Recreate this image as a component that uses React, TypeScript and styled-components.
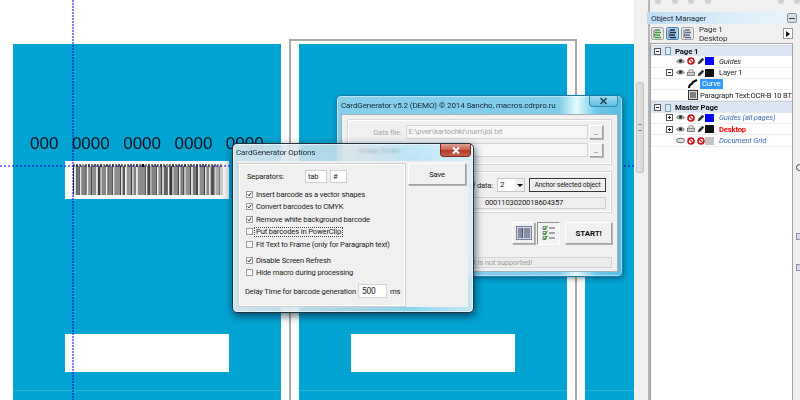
import React from 'react';
import styled, { createGlobalStyle } from 'styled-components';

const GlobalStyle = createGlobalStyle`
  html, body {
    margin: 0;
    padding: 0;
    background: #fff;
  }
  * {
    box-sizing: border-box;
  }
`;

const Screen = styled.div`
  width: 800px;
  height: 400px;
  display: flex;
  overflow: hidden;
  position: relative;
  font-family: Roboto, "Liberation Sans", Arial, sans-serif;
  font-size: 7.6px;
  letter-spacing: -0.15px;
  color: #1c1c1c;
  filter: blur(0.25px);
`;

/* ---------- drawing canvas ---------- */

const Canvas = styled.div`
  position: relative;
  width: 634px;
  flex: none;
  background: #fff;
  overflow: hidden;
`;

const Card = styled.div<{ $x: number; $w: number }>`
  position: absolute;
  left: ${p => p.$x}px;
  top: 44px;
  width: ${p => p.$w}px;
  height: 356px;
  background: #00a3d2;
  &::after {
    content: '';
    position: absolute;
    left: 0;
    right: 0;
    top: 346px;
    height: 1px;
    background: #2cb3da;
  }
`;

const PageFrame = styled.div`
  position: absolute;
  left: 289px;
  top: 39px;
  width: 288px;
  height: 380px;
  border: 2px solid #a8a8a8;
`;

const WhitePlate = styled.div<{ $x: number; $y: number }>`
  position: absolute;
  left: ${p => p.$x}px;
  top: ${p => p.$y}px;
  width: 164px;
  height: 38px;
  background: #fff;
`;

const CardNumber = styled.div`
  position: absolute;
  left: 30px;
  top: 134px;
  display: flex;
  gap: 13.5px;
  font-family: "Liberation Sans", Arial, sans-serif;
  font-size: 17px;
  line-height: 20px;
  letter-spacing: 0;
  color: #06131c;
`;

const GuideV = styled.div`
  position: absolute;
  left: 72px;
  top: 0;
  bottom: 0;
  width: 2px;
  background: repeating-linear-gradient(to bottom, #8080ff 0 2px, transparent 2px 3px);
  mix-blend-mode: multiply;
`;

const GuideH = styled.div`
  position: absolute;
  left: 0;
  right: 0;
  top: 165px;
  height: 2px;
  background: repeating-linear-gradient(to right, #8080ff 0 2px, transparent 2px 4px);
  mix-blend-mode: multiply;
`;

const BarcodeArt = styled.svg`
  position: absolute;
  left: 65px;
  top: 161px;
`;

// width, grey level: bars blur into each other, as in a shrunken barcode
const barRuns: [number, number][] = [
  [1, 70], [1, 255], [2, 110], [1, 60], [1, 230], [3, 130], [1, 50], [1, 240], [2, 150], [1, 70], [3, 140], [1, 245],
  [2, 60], [1, 190], [3, 135], [1, 240], [1, 70], [2, 130], [1, 50], [1, 235], [4, 140], [1, 70], [1, 220], [2, 90],
  [1, 245], [3, 150], [1, 60], [1, 200], [2, 130], [1, 245], [5, 140], [1, 70], [1, 235], [2, 70], [1, 170], [3, 130],
  [1, 60], [1, 250], [2, 145], [1, 60], [1, 230], [3, 100], [1, 245], [2, 60], [1, 180], [3, 140], [1, 55], [1, 240],
  [2, 130], [1, 65], [1, 200], [3, 145], [1, 60], [1, 245], [2, 120], [2, 70], [1, 240], [3, 140], [1, 60], [1, 225],
  [2, 130], [1, 240], [3, 80], [1, 200], [2, 145], [1, 60], [2, 170],
];

const runTotal = barRuns.reduce((sum, [w]) => sum + w, 0);
const stretch = 150 / runTotal;

const bars = barRuns.reduce<{ x: number; w: number; g: number }[]>((list, [w, g]) => {
  const last = list[list.length - 1];
  list.push({ x: last ? last.x + last.w : 8, w: w * stretch, g });
  return list;
}, []);

const codeMarks = Array.from({ length: 50 }, (_, i) => i);

function Barcode() {
  return (
    <BarcodeArt width="164" height="38" viewBox="0 0 164 38">
      <defs>
        <linearGradient id="fade" x1="0" x2="1" y1="0" y2="0">
          <stop offset="0.9" stopColor="#fff" stopOpacity="0" />
          <stop offset="1" stopColor="#ddd" stopOpacity="0.8" />
        </linearGradient>
      </defs>
      {bars.map(b => (
        <rect key={b.x} x={b.x} y="5" width={b.w} height="29" fill={`rgb(${b.g},${b.g},${b.g})`} />
      ))}
      {codeMarks.map(i => (
        <rect
          key={i}
          x={8 + i * 3}
          y="3"
          width="2"
          height="3"
          fill={i === 23 ? '#000' : i % 7 === 3 ? '#9a9a40' : i % 2 ? '#555' : '#777'}
        />
      ))}
      <rect x="0" y="0" width="164" height="38" fill="url(#fade)" />
    </BarcodeArt>
  );
}

/* ---------- aero windows ---------- */

const Win = styled.div<{ $x: number; $y: number; $w: number; $h: number; $focused?: boolean }>`
  position: absolute;
  left: ${p => p.$x}px;
  top: ${p => p.$y}px;
  width: ${p => p.$w}px;
  height: ${p => p.$h}px;
  display: flex;
  flex-direction: column;
  padding: ${p => (p.$focused ? '0 5px 5px' : '0 4px 4px')};
  border-radius: 5px;
  border: 1px solid ${p => (p.$focused ? '#24343f' : '#1a7fa8')};
  backdrop-filter: ${p => (p.$focused ? 'blur(1px)' : 'none')};
  box-shadow: ${p =>
    p.$focused
      ? '0 0 0 1px rgba(255,255,255,.55) inset, 1px 3px 9px rgba(0,20,40,.65)'
      : '0 0 0 1px rgba(255,255,255,.45) inset, 1px 2px 5px rgba(0,40,70,.45)'};
  background: ${p =>
    p.$focused
      ? 'linear-gradient(90deg, rgba(226,234,240,.9) 0%, rgba(205,224,234,.8) 55%, rgba(176,226,246,.8) 75%, rgba(216,238,250,.9) 100%)'
      : 'linear-gradient(90deg, #86cfea 0%, #80cdea 78%, #e6faff 84%, #6cc8ea 91%, #58bce2 100%)'};
`;

const TitleBar = styled.div<{ $h: number }>`
  height: ${p => p.$h}px;
  flex: none;
  display: flex;
  align-items: center;
  position: relative;
  font-size: 8px;
  letter-spacing: -0.1px;
  color: #16242e;
  white-space: nowrap;
`;

const OptionsTitle = styled.span`
  margin-left: -2px;
`;

const CloseBtn = styled.div<{ $active?: boolean }>`
  position: absolute;
  right: ${p => (p.$active ? '-3px' : '0')};
  top: 0;
  width: ${p => (p.$active ? '31px' : '29px')};
  height: ${p => (p.$active ? '13px' : '11px')};
  display: flex;
  align-items: center;
  justify-content: center;
  border-radius: 0 0 4px 4px;
  border: 1px solid ${p => (p.$active ? '#7c2a20' : '#2f8bb0')};
  border-top: none;
  background: ${p =>
    p.$active
      ? 'linear-gradient(#dfa398 0%, #c9604f 48%, #b13a28 55%, #c9614c 100%)'
      : 'linear-gradient(#a5dcf0, #63bfe2)'};
`;

const Client = styled.div`
  flex: 1;
  min-height: 0;
  background: #f0f0f0;
  border: 1px solid #9fb1ba;
`;

/* main window */

const MainClient = styled(Client)`
  display: flex;
  flex-direction: column;
  gap: 6px;
  padding: 4px 5px 3px;
`;

const Group = styled.div<{ $h: number }>`
  height: ${p => p.$h}px;
  flex: none;
  display: flex;
  flex-direction: column;
  border: 1px solid #d6d6d6;
  box-shadow: inset 0 0 0 1px #fff;
`;

const FileGroup = styled(Group)`
  gap: 4px;
  padding: 5px 8px 0 0;
`;

const FileRow = styled.div`
  display: flex;
  align-items: center;
  gap: 1px;
`;

const FileLabel = styled.span<{ $behindGlass?: boolean }>`
  width: 57px;
  padding-right: 3px;
  text-align: right;
  color: ${p => (p.$behindGlass ? '#111' : '#a8a8a8')};
`;

const FileInput = styled.div`
  width: 184px;
  height: 14px;
  padding: 0 2px;
  border: 1px solid #d4d4d4;
  background: #f7f7f7;
  color: #a4a4a4;
  line-height: 12px;
  white-space: nowrap;
`;

const RaisedBtn = styled.div<{ $w: number; $h: number; $bold?: boolean }>`
  width: ${p => p.$w}px;
  height: ${p => p.$h}px;
  flex: none;
  display: flex;
  align-items: center;
  justify-content: center;
  background: #f0f0f0;
  border: 1px solid;
  border-color: #fff #a0a0a0 #a0a0a0 #fff;
  box-shadow: 1px 1px 0 #b4b4b4;
  color: #111;
  font-size: ${p => (p.$bold ? '8px' : '7.6px')};
  font-weight: ${p => (p.$bold ? 700 : 400)};
`;

const PressedBtn = styled(RaisedBtn)`
  border-color: #8f8f8f #fff #fff #8f8f8f;
  box-shadow: none;
  background: #f4f4f4;
`;

const AnchorGroup = styled(Group)`
  align-items: flex-end;
  gap: 5px;
  padding: 6px 5px 0 0;
`;

const AnchorRow = styled.div`
  display: flex;
  align-items: center;
`;

const DataLabel = styled.span`
  margin-right: 4px;
`;

const Combo = styled.div`
  width: 28px;
  height: 14px;
  display: flex;
  justify-content: space-between;
  padding-left: 2px;
  border: 1px solid #c8c8c8;
  background: #fff;
  font-size: 8px;
  line-height: 12px;
  margin-right: 4px;
`;

const ComboArrow = styled.span`
  width: 9px;
  background: #eee;
  display: flex;
  align-items: center;
  justify-content: center;
  &::after {
    content: '';
    border: 3px solid transparent;
    border-top: 3px solid #111;
    margin-top: 3px;
  }
`;

const AnchorBtn = styled.div`
  width: 77px;
  height: 14px;
  display: flex;
  align-items: center;
  justify-content: center;
  border: 1px solid #333;
  box-shadow: inset 0 0 0 1px #f8f8f8;
  background: #ececec;
  font-size: 6.8px;
  white-space: nowrap;
`;

const Readout = styled.div`
  width: 164px;
  height: 12px;
  border: 1px solid #d0d0d0;
  text-align: center;
  line-height: 10px;
  background: #eeeeee;
`;

const ActionRow = styled.div`
  display: flex;
  align-items: flex-start;
  justify-content: flex-end;
  gap: 2px;
  padding-top: 3px;
`;

const StartBtn = styled(RaisedBtn)`
  margin-left: 3px;
`;

const StatusBar = styled.div`
  height: 11px;
  margin-top: 12px;
  padding-right: 79px;
  border: 1px solid #d4d4d4;
  background: #ececec;
  color: #a0a0a0;
  text-align: right;
  line-height: 9px;
`;

/* options window */

const OptionsBody = styled(Client)`
  display: flex;
  gap: 2px;
  padding: 2px 2px 0 0;
  border: none;
`;

const OptionsPanel = styled.div`
  width: 168px;
  height: 144px;
  flex: none;
  padding: 6px 0 0 6px;
  border: 1px solid #cfcfcf;
  box-shadow: inset 0 0 0 1px #fff;
`;

const SeparatorRow = styled.div`
  display: flex;
  align-items: center;
  height: 13px;
  margin-bottom: 5px;
  padding-left: 2px;
`;

const SeparatorLabel = styled.span`
  width: 58px;
`;

const SmallInput = styled.div<{ $w: number }>`
  width: ${p => p.$w}px;
  height: 13px;
  margin-right: 3px;
  padding-left: 2px;
  border: 1px solid #d0d0d0;
  background: #fff;
  line-height: 11px;
`;

const OptionList = styled.div<{ $after?: number }>`
  display: flex;
  flex-direction: column;
  margin-bottom: ${p => p.$after ?? 0}px;
`;

const OptionRow = styled.div`
  height: 12.5px;
  display: flex;
  align-items: center;
  gap: 3px;
  padding-left: 1px;
  white-space: nowrap;
`;

const CheckBox = styled.span`
  width: 7px;
  height: 7px;
  flex: none;
  display: flex;
  align-items: center;
  justify-content: center;
  border: 1px solid #9a9a9a;
  background: #fff;
`;

const FocusLabel = styled.span`
  outline: 1px dotted #444;
  padding: 0 1px;
  margin-left: -1px;
  line-height: 8px;
`;

const DelayRow = styled.div`
  display: flex;
  align-items: center;
  margin-top: 5px;
  white-space: nowrap;
`;

const DelayLabel = styled.span`
  width: 113px;
`;

const DelayInput = styled.div`
  width: 29px;
  height: 14px;
  margin-right: 3px;
  padding-left: 3px;
  border: 1px solid #d0d0d0;
  background: #fff;
  font-size: 8.4px;
  line-height: 12px;
`;

/* ---------- right dockers ---------- */

const ScrollTrack = styled.div`
  width: 16px;
  flex: none;
  padding: 82px 6px 0 2px;
  background: #f0f0f0;
  border-right: 2px solid #b5b5b5;
`;

const ScrollThumb = styled.div`
  width: 8px;
  height: 91px;
  display: flex;
  align-items: center;
  justify-content: center;
  background: linear-gradient(90deg, #e4e4e4, #d6d6d6);
  border: 1px solid #c4c4c4;
  border-radius: 2px;
  &::after {
    content: '';
    width: 4px;
    height: 5px;
    border-top: 1px solid #888;
    border-bottom: 1px solid #888;
  }
`;

const Docker = styled.div`
  flex: 1;
  min-width: 0;
  display: flex;
  flex-direction: column;
  background: #f0f0f0;
`;

const TopStrip = styled.div`
  height: 12px;
  flex: none;
  display: flex;
  align-items: flex-start;
  gap: 10.5px;
  padding-left: 5px;
`;

const StripIcon = styled.span<{ $push?: boolean }>`
  width: 6px;
  height: 4px;
  background: #d2d2d2;
  border-radius: 0 0 2px 2px;
  margin-left: ${p => (p.$push ? 'auto' : 0)};
`;

const DockTitle = styled.div`
  height: 12px;
  flex: none;
  display: flex;
  align-items: center;
  justify-content: space-between;
  margin-left: -3px;
  padding: 0 3px 0 4px;
  position: relative;
  background: linear-gradient(90deg, #bcdcf3, #dceefa 55%, #eaf4fb);
  font-size: 8px;
  letter-spacing: -0.1px;
  color: #20303c;
`;

const DockBtn = styled.span`
  width: 10px;
  height: 10px;
  display: flex;
  align-items: center;
  justify-content: center;
  border: 1px solid #8a959c;
  border-radius: 2px;
  background: #d8dde0;
  &::after {
    content: '';
    width: 6px;
    height: 1px;
    background: #444;
  }
`;

const DockTools = styled.div`
  height: 19px;
  flex: none;
  display: flex;
  align-items: center;
  padding: 0 7px 0 1px;
  gap: 2px;
`;

const ToolBtn = styled.span<{ $on?: boolean }>`
  width: 13px;
  height: 13px;
  flex: none;
  display: flex;
  align-items: center;
  justify-content: center;
  border: 1px solid ${p => (p.$on ? '#4d86b0' : '#a3a3a3')};
  border-radius: 2px;
  background: ${p => (p.$on ? '#a9d2ee' : '#e8e8e8')};
`;

const PageInfo = styled.div`
  margin-left: 3px;
  flex: 1;
  font-size: 8px;
  line-height: 9px;
  color: #333;
`;

const ForwardBtn = styled.span`
  width: 10px;
  height: 11px;
  display: flex;
  align-items: center;
  justify-content: center;
  border: 1px solid #999;
  background: #fff;
  &::after {
    content: '';
    border: 3px solid transparent;
    border-left: 4px solid #111;
    border-right: none;
  }
`;

const TreeWrap = styled.div`
  flex: 1;
  min-height: 0;
  display: flex;
`;

const Tree = styled.div`
  width: 143px;
  flex: none;
  padding-top: 1px;
  background: #fff;
  border: 1px solid #a2a2a2;
  border-bottom: none;
`;

const SideStrip = styled.div`
  flex: 1;
  min-width: 0;
  overflow: hidden;
  display: flex;
  flex-direction: column;
  padding-top: 121px;
  padding-left: 3px;
`;

const SideMark = styled.span<{ $mt: number; $dark?: boolean }>`
  display: block;
  margin-top: ${p => p.$mt}px;
  width: 8px;
  height: 7px;
  border: 1px solid ${p => (p.$dark ? '#444' : '#8c93a6')};
  border-radius: ${p => (p.$dark ? '4px' : '0')};
  background: ${p => (p.$dark ? 'transparent' : '#dde')};
`;

const SectionRow = styled.div`
  height: 11.3px;
  display: flex;
  align-items: center;
  padding-left: 3px;
  background: #dbe6f2;
  border-top: 1px solid #c9d5e2;
  font-size: 7.8px;
  font-weight: 700;
  color: #111;
`;

const TreeRow = styled.div<{ $indent: number }>`
  height: 11.3px;
  display: flex;
  align-items: center;
  padding-left: ${p => p.$indent}px;
  border-bottom: 1px solid #eeeeee;
  white-space: nowrap;
`;

const Expander = styled.span`
  width: 7px;
  height: 7px;
  flex: none;
  position: relative;
  margin-right: 4px;
  border: 1px solid #555;
  background: #fff;
  &::after {
    content: '';
    position: absolute;
    left: 1px;
    top: 2px;
    width: 3px;
    height: 1px;
    background: #222;
  }
`;

const LayerExpander = styled(Expander)`
  margin-right: 3px;
`;

const PlusExpander = styled(LayerExpander)`
  &::before {
    content: '';
    position: absolute;
    left: 2px;
    top: 1px;
    width: 1px;
    height: 3px;
    background: #222;
  }
`;

const SheetIcon = styled.span`
  width: 6px;
  height: 8px;
  flex: none;
  border: 1px solid #7f9aa8;
  background: #d8eeee;
  margin-right: 4px;
`;

const IconSet = styled.span`
  display: flex;
  flex: none;
  align-items: center;
  gap: 2px;
`;

const Swatch = styled.span<{ $c: string }>`
  width: 9px;
  height: 8px;
  flex: none;
  margin-right: 5px;
  background: ${p => p.$c};
`;

const RowLabel = styled.span<{ $tone?: 'blue' | 'red' | 'italic' }>`
  font-style: ${p => (p.$tone === 'blue' || p.$tone === 'italic' ? 'italic' : 'normal')};
  font-weight: ${p => (p.$tone === 'red' ? 700 : 400)};
  color: ${p => (p.$tone === 'blue' ? '#3f6bb0' : p.$tone === 'red' ? '#f00' : '#222')};
`;

const Selected = styled.span`
  background: #3399ff;
  color: #fff;
  padding: 0 2px;
  line-height: 10px;
`;

const ObjectIcon = styled.span`
  width: 10px;
  height: 10px;
  flex: none;
  display: flex;
  margin-right: 2px;
`;

/* ---------- little drawings ---------- */

const Tick = () => (
  <svg width="7" height="7" viewBox="0 0 7 7">
    <path d="M1 3.2 L2.8 5.4 L6 1" fill="none" stroke="#222" strokeWidth="1.4" />
  </svg>
);

const Eye = () => (
  <svg width="9" height="7" viewBox="0 0 9 7">
    <path d="M0.5 3.5 C2.5 0.5 6.5 0.5 8.5 3.5 C6.5 5.5 2.5 5.5 0.5 3.5 Z" fill="#bbb" stroke="#555" strokeWidth="0.7" />
    <circle cx="4.5" cy="3" r="1.5" fill="#222" />
  </svg>
);

const NoPrint = () => (
  <svg width="8" height="8" viewBox="0 0 8 8">
    <circle cx="4" cy="4" r="3" fill="#fff" stroke="#c4161c" strokeWidth="1.6" />
    <path d="M2 2 L6 6" stroke="#c4161c" strokeWidth="1.1" />
  </svg>
);

const Printer = () => (
  <svg width="8" height="8" viewBox="0 0 8 8">
    <path d="M2 3 V0.8 H6 V3" fill="#fff" stroke="#666" strokeWidth="0.7" />
    <rect x="0.5" y="3.2" width="7" height="3.4" fill="#ccc" stroke="#555" strokeWidth="0.7" />
  </svg>
);

const Pen = () => (
  <svg width="8" height="8" viewBox="0 0 8 8">
    <path d="M0.8 7.2 L1.6 4.6 L5.4 0.8 L7.2 2.6 L3.4 6.4 Z" fill="#333" />
  </svg>
);

const GridEye = () => (
  <svg width="9" height="7" viewBox="0 0 9 7">
    <ellipse cx="4.5" cy="3.5" rx="4" ry="2.3" fill="#ddd" stroke="#555" strokeWidth="0.8" />
  </svg>
);

const CurveGlyph = () => (
  <svg width="10" height="10" viewBox="0 0 10 10">
    <path d="M1 9 C1 4 5 6 5 3 L9 1" fill="none" stroke="#111" strokeWidth="2.2" />
  </svg>
);

const ParagraphGlyph = () => (
  <svg width="10" height="10" viewBox="0 0 10 10">
    <rect x="0.5" y="0.5" width="9" height="9" fill="#ddd" stroke="#333" />
    <path d="M2 3 H8 M2 5 H8 M2 7 H8" stroke="#222" />
  </svg>
);

const BarcodeGlyph = () => (
  <svg width="16" height="14" viewBox="0 0 16 14">
    <rect x="0.5" y="0.5" width="15" height="13" fill="#cfd6e4" stroke="#77809a" />
    <path d="M3 2 V12 M5 2 V12 M6.5 2 V12 M9 2 V12 M11 2 V12 M13 2 V12" stroke="#4a5270" strokeWidth="1.1" />
  </svg>
);

const ChecklistGlyph = () => (
  <svg width="14" height="17" viewBox="0 0 14 17">
    <path d="M1 1.5 H4 V4.5 H1 Z M1 6.5 H4 V9.5 H1 Z M1 11.5 H4 V14.5 H1 Z" fill="#fff" stroke="#555" strokeWidth="0.7" />
    <path d="M1.5 3 L3 4.3 L5.5 0.8 M1.5 8 L3 9.3 L5.5 5.8 M1.5 13 L3 14.3 L5.5 10.8" fill="none" stroke="#2e9a2e" strokeWidth="1.1" />
    <path d="M7 3 H13 M7 8 H13 M7 13 H13" stroke="#555" />
  </svg>
);

const TreeToolGlyph = ({ tone }: { tone: string }) => (
  <svg width="9" height="10" viewBox="0 0 9 10">
    <path d="M2 1 H7 M2 3.5 H8 M1 6 H7 M2 8.5 H8" stroke={tone} strokeWidth="1.3" />
    <path d="M1 1 V9" stroke="#555" strokeWidth="0.8" />
  </svg>
);

/* ---------- data ---------- */

const firstOptions = [
  { label: 'Insert barcode as a vector shapes', checked: true },
  { label: 'Convert barcodes to CMYK', checked: true },
  { label: 'Remove white background barcode', checked: true },
  { label: 'Put barcodes in PowerClip', checked: false, focus: true },
  { label: 'Fit Text to Frame (only for Paragraph text)', checked: false },
];

const secondOptions = [
  { label: 'Disable Screen Refresh', checked: true },
  { label: 'Hide macro during processing', checked: false },
];

function Option({ label, checked, focus }: { label: string; checked: boolean; focus?: boolean }) {
  return (
    <OptionRow>
      <CheckBox>{checked && <Tick />}</CheckBox>
      {focus ? <FocusLabel>{label}</FocusLabel> : <span>{label}</span>}
    </OptionRow>
  );
}

export default function App() {
  return (
    <>
      <GlobalStyle />
      <Screen>
        <Canvas>
          <PageFrame />
          <Card $x={13} $w={268} />
          <Card $x={299} $w={268} />
          <Card $x={585} $w={49} />
          <CardNumber>
            <span>000</span>
            <span>0000</span>
            <span>0000</span>
            <span>0000</span>
            <span>0000</span>
          </CardNumber>
          <WhitePlate $x={65} $y={161} />
          <Barcode />
          <WhitePlate $x={65} $y={334} />
          <WhitePlate $x={351} $y={334} />
          <GuideV />
          <GuideH />

          <Win $x={336} $y={95} $w={287} $h={182}>
            <TitleBar $h={18}>
              CardGenerator v5.2 (DEMO) © 2014 Sancho, macros.cdrpro.ru
              <CloseBtn>
                <svg width="9" height="8" viewBox="0 0 9 8">
                  <path d="M1.5 1 L7.5 7 M7.5 1 L1.5 7" stroke="#25465a" strokeWidth="1.6" />
                </svg>
              </CloseBtn>
            </TitleBar>
            <MainClient>
              <FileGroup $h={46}>
                <FileRow>
                  <FileLabel>Data file:</FileLabel>
                  <FileInput>E:\pver\kartochki\num\jol.txt</FileInput>
                  <RaisedBtn $w={14} $h={14}>..</RaisedBtn>
                </FileRow>
                <FileRow>
                  <FileLabel $behindGlass>Image folder:</FileLabel>
                  <FileInput />
                  <RaisedBtn $w={14} $h={14}>..</RaisedBtn>
                </FileRow>
              </FileGroup>
              <AnchorGroup $h={42}>
                <AnchorRow>
                  <DataLabel>Rows of data:</DataLabel>
                  <Combo>
                    2
                    <ComboArrow />
                  </Combo>
                  <AnchorBtn>Anchor selected object</AnchorBtn>
                </AnchorRow>
                <Readout>0001103020018604357</Readout>
              </AnchorGroup>
              <div>
                <ActionRow>
                  <RaisedBtn $w={23} $h={22}><BarcodeGlyph /></RaisedBtn>
                  <PressedBtn $w={23} $h={23}><ChecklistGlyph /></PressedBtn>
                  <StartBtn $w={47} $h={22} $bold>START!</StartBtn>
                </ActionRow>
                <StatusBar>Object is not supported!</StatusBar>
              </div>
            </MainClient>
          </Win>

          <Win $x={232} $y={143} $w={242} $h={170} $focused>
            <TitleBar $h={17}>
              <OptionsTitle>CardGenerator Options</OptionsTitle>
              <CloseBtn $active>
                <svg width="10" height="9" viewBox="0 0 10 9">
                  <path d="M2 1.5 L8 7.5 M8 1.5 L2 7.5" stroke="#fff" strokeWidth="2" />
                </svg>
              </CloseBtn>
            </TitleBar>
            <OptionsBody>
              <OptionsPanel>
                <SeparatorRow>
                  <SeparatorLabel>Separators:</SeparatorLabel>
                  <SmallInput $w={22}>tab</SmallInput>
                  <SmallInput $w={17}>#</SmallInput>
                </SeparatorRow>
                <OptionList $after={3.5}>
                  {firstOptions.map(o => (
                    <Option key={o.label} {...o} />
                  ))}
                </OptionList>
                <OptionList>
                  {secondOptions.map(o => (
                    <Option key={o.label} {...o} />
                  ))}
                </OptionList>
                <DelayRow>
                  <DelayLabel>Delay Time for barcode generation</DelayLabel>
                  <DelayInput>500</DelayInput>
                  ms
                </DelayRow>
              </OptionsPanel>
              <RaisedBtn $w={58} $h={22}>Save</RaisedBtn>
            </OptionsBody>
          </Win>
        </Canvas>

        <ScrollTrack>
          <ScrollThumb />
        </ScrollTrack>

        <Docker>
          <TopStrip>
            <StripIcon />
            <StripIcon />
            <StripIcon />
            <StripIcon />
            <StripIcon $push />
            <StripIcon />
          </TopStrip>
          <DockTitle>
            Object Manager
            <DockBtn />
          </DockTitle>
          <DockTools>
            <ToolBtn><TreeToolGlyph tone="#3f9a3f" /></ToolBtn>
            <ToolBtn $on><TreeToolGlyph tone="#1b2a4a" /></ToolBtn>
            <ToolBtn><TreeToolGlyph tone="#5a6f8a" /></ToolBtn>
            <PageInfo>
              Page 1
              <br />
              Desktop
            </PageInfo>
            <ForwardBtn />
          </DockTools>
          <TreeWrap>
            <Tree>
              <SectionRow>
                <Expander />
                <SheetIcon />
                Page 1
              </SectionRow>
              <TreeRow $indent={25}>
                <IconSet><Eye /><NoPrint /><Pen /></IconSet>
                <Swatch $c="#0000ff" />
                <RowLabel $tone="italic">Guides</RowLabel>
              </TreeRow>
              <TreeRow $indent={15}>
                <LayerExpander />
                <IconSet><Eye /><Printer /><Pen /></IconSet>
                <Swatch $c="#111" />
                <RowLabel>Layer 1</RowLabel>
              </TreeRow>
              <TreeRow $indent={37}>
                <ObjectIcon><CurveGlyph /></ObjectIcon>
                <Selected>Curve</Selected>
              </TreeRow>
              <TreeRow $indent={37}>
                <ObjectIcon><ParagraphGlyph /></ObjectIcon>
                <RowLabel>Paragraph Text:OCR-B 10 BT</RowLabel>
              </TreeRow>
              <SectionRow>
                <Expander />
                <SheetIcon />
                Master Page
              </SectionRow>
              <TreeRow $indent={15}>
                <PlusExpander />
                <IconSet><Eye /><NoPrint /><Pen /></IconSet>
                <Swatch $c="#0000ff" />
                <RowLabel $tone="blue">Guides (all pages)</RowLabel>
              </TreeRow>
              <TreeRow $indent={15}>
                <PlusExpander />
                <IconSet><Eye /><Printer /><Pen /></IconSet>
                <Swatch $c="#111" />
                <RowLabel $tone="red">Desktop</RowLabel>
              </TreeRow>
              <TreeRow $indent={25}>
                <IconSet><GridEye /><NoPrint /><NoPrint /></IconSet>
                <Swatch $c="#c4c4c4" />
                <RowLabel $tone="blue">Document Grid</RowLabel>
              </TreeRow>
            </Tree>
            <SideStrip>
              <SideMark $mt={0} $dark />
              <SideMark $mt={62} />
              <SideMark $mt={24} />
            </SideStrip>
          </TreeWrap>
        </Docker>
      </Screen>
    </>
  );
}
